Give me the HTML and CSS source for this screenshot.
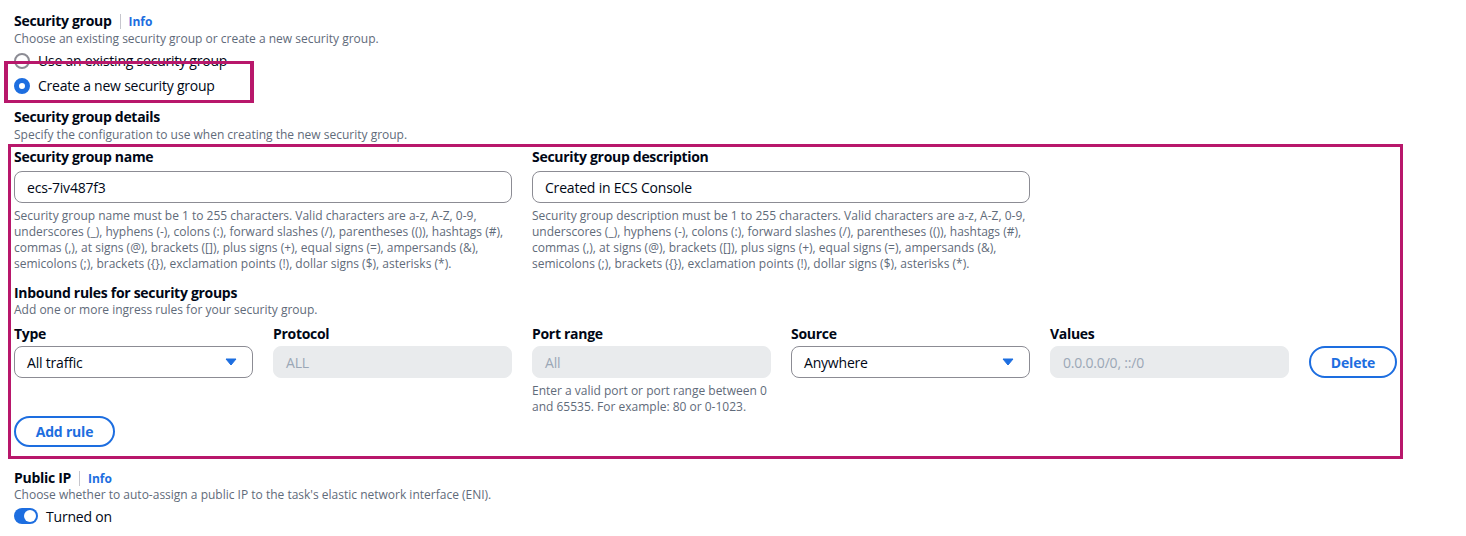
FILE: index.html
```html
<!DOCTYPE html>
<html lang="en">
<head>
<meta charset="utf-8">
<title>Security group</title>
<link rel="stylesheet" href="styles.css">
</head>
<body>
<div class="page">
  <section class="field">
    <div class="field-head">
      <span class="label">Security group</span>
      <span class="sep"></span>
      <a class="info" href="#">Info</a>
    </div>
    <div class="desc">Choose an existing security group or create a new security group.</div>
    <div class="radios">
      <label class="radio"><span class="dot"></span>Use an existing security group</label>
      <label class="radio"><span class="dot checked"></span>Create a new security group</label>
    </div>
  </section>

  <section class="details">
    <div class="label">Security group details</div>
    <div class="desc">Specify the configuration to use when creating the new security group.</div>
  </section>

  <section class="config">
    <div class="pair">
      <div class="col">
        <div class="label">Security group name</div>
        <div class="input">ecs-7iv487f3</div>
        <div class="help">Security group name must be 1 to 255 characters. Valid characters are a-z, A-Z, 0-9, underscores (_), hyphens (-), colons (:), forward slashes (/), parentheses (()), hashtags (#), commas (,), at signs (@), brackets ([]), plus signs (+), equal signs (=), ampersands (&amp;), semicolons (;), brackets ({}), exclamation points (!), dollar signs ($), asterisks (*).</div>
      </div>
      <div class="col">
        <div class="label">Security group description</div>
        <div class="input">Created in ECS Console</div>
        <div class="help">Security group description must be 1 to 255 characters. Valid characters are a-z, A-Z, 0-9, underscores (_), hyphens (-), colons (:), forward slashes (/), parentheses (()), hashtags (#), commas (,), at signs (@), brackets ([]), plus signs (+), equal signs (=), ampersands (&amp;), semicolons (;), brackets ({}), exclamation points (!), dollar signs ($), asterisks (*).</div>
      </div>
    </div>

    <div class="inbound">
      <div class="label">Inbound rules for security groups</div>
      <div class="desc">Add one or more ingress rules for your security group.</div>
    </div>

    <div class="rules">
      <div class="col">
        <div class="label">Type</div>
        <div class="input select">All traffic
          <svg class="caret" width="12" height="8" viewBox="0 0 12 8"><path d="M1 1 H11 L6 7 Z" fill="#1d6ee0" stroke="#1d6ee0" stroke-width="1" stroke-linejoin="round"/></svg>
        </div>
      </div>
      <div class="col">
        <div class="label">Protocol</div>
        <div class="input disabled">ALL</div>
      </div>
      <div class="col">
        <div class="label">Port range</div>
        <div class="input disabled">All</div>
        <div class="help tight">Enter a valid port or port range between 0 and 65535. For example: 80 or 0-1023.</div>
      </div>
      <div class="col">
        <div class="label">Source</div>
        <div class="input select">Anywhere
          <svg class="caret" width="12" height="8" viewBox="0 0 12 8"><path d="M1 1 H11 L6 7 Z" fill="#1d6ee0" stroke="#1d6ee0" stroke-width="1" stroke-linejoin="round"/></svg>
        </div>
      </div>
      <div class="col">
        <div class="label">Values</div>
        <div class="input disabled">0.0.0.0/0, ::/0</div>
      </div>
      <div class="col action">
        <button class="btn">Delete</button>
      </div>
    </div>

    <button class="btn add">Add rule</button>
  </section>

  <section class="field public">
    <div class="field-head">
      <span class="label">Public IP</span>
      <span class="sep"></span>
      <a class="info" href="#">Info</a>
    </div>
    <div class="desc">Choose whether to auto-assign a public IP to the task's elastic network interface (ENI).</div>
    <div class="toggle-row"><span class="toggle"><span class="knob"></span></span>Turned on</div>
  </section>

  <div class="highlight hl-radio"></div>
  <div class="highlight hl-config"></div>
</div>
</body>
</html>
```

FILE: styles.css
```css
* { box-sizing: border-box; }

body {
  margin: 0;
  background: #ffffff;
  font-family: "Open Sans", "Noto Sans", "Liberation Sans", sans-serif;
  color: #000716;
  font-size: 14px;
}

.page {
  position: relative;
  padding: 11px 14px 0 14px;
  width: 1466px;
  height: 536px;
  overflow: hidden;
}

.label {
  font-weight: 700;
  font-size: 14px;
  line-height: 18px;
  letter-spacing: -0.3px;
  color: #000716;
}

.field-head {
  display: flex;
  align-items: center;
  height: 20px;
}

.sep {
  width: 1px;
  height: 15px;
  background: #c6c6cd;
  margin: 0 8px;
}

.info {
  color: #1d6ee0;
  font-weight: 700;
  font-size: 12px;
  text-decoration: none;
}

.desc {
  font-size: 12px;
  line-height: 16px;
  color: #5f6b7a;
}

.details .desc {
  margin-top: 1px;
}

.radios {
  display: flex;
  flex-direction: column;
  gap: 5px;
  margin-top: 4px;
}

.radio {
  display: flex;
  align-items: center;
  gap: 8px;
  height: 20px;
  font-size: 14px;
  line-height: 20px;
  letter-spacing: -0.22px;
}

.dot {
  width: 16px;
  height: 16px;
  border-radius: 50%;
  border: 2px solid #8c8c94;
  background: #fff;
}

.dot.checked {
  border: 5px solid #1d6ee0;
}

.details {
  margin-top: 12px;
}

.config {
  padding-top: 5px;
}

.pair {
  display: grid;
  grid-template-columns: 498px 498px;
  column-gap: 20px;
}

.input {
  margin-top: 5px;
  height: 32px;
  border: 1px solid #8c8c94;
  border-radius: 8px;
  padding: 0 12px;
  display: flex;
  align-items: center;
  font-size: 14px;
  letter-spacing: -0.2px;
  color: #000716;
}

.input.disabled {
  border-color: #e9ebed;
  background: #e9ebed;
  color: #9ba7b6;
}

.input.select {
  justify-content: space-between;
  padding-right: 15px;
}

.help {
  margin-top: 5px;
  font-size: 12px;
  line-height: 16px;
  color: #5f6b7a;
}

.help.tight {
  margin-top: 5px;
}

.inbound {
  margin-top: 12px;
}

.rules {
  display: grid;
  grid-template-columns: repeat(5, 239px) 88px;
  column-gap: 20px;
  margin-top: 7px;
}

.rules .input {
  margin-top: 3px;
}

.action {
  display: flex;
  align-items: flex-start;
  padding-top: 21px;
}

.btn {
  font-family: inherit;
  font-weight: 700;
  font-size: 14px;
  letter-spacing: -0.2px;
  color: #1d6ee0;
  background: #fff;
  border: 2px solid #1d6ee0;
  border-radius: 20px;
  height: 32px;
  padding: 0 20px;
  cursor: pointer;
}

.action .btn {
  width: 88px;
  padding: 0;
}

.btn.add {
  margin-top: 1px;
  width: 101px;
  height: 31px;
  padding: 0;
}

.public {
  margin-top: 21px;
}

.public .desc {
  margin-top: -1px;
}

.toggle-row {
  display: flex;
  align-items: center;
  gap: 8px;
  margin-top: 3px;
  height: 20px;
  font-size: 14px;
  letter-spacing: -0.2px;
}

.toggle {
  width: 24px;
  height: 16px;
  border-radius: 8px;
  background: #1d6ee0;
  position: relative;
}

.knob {
  position: absolute;
  right: 2px;
  top: 2px;
  width: 12px;
  height: 12px;
  border-radius: 50%;
  background: #fff;
}

.highlight {
  position: absolute;
  border: 3px solid #b8176b;
  pointer-events: none;
}

.hl-radio {
  left: 4px;
  top: 61px;
  width: 250px;
  height: 42px;
  border-width: 3px 4px 3px 4px;
}

.hl-config {
  left: 8px;
  top: 144px;
  width: 1395px;
  height: 315px;
}
```
